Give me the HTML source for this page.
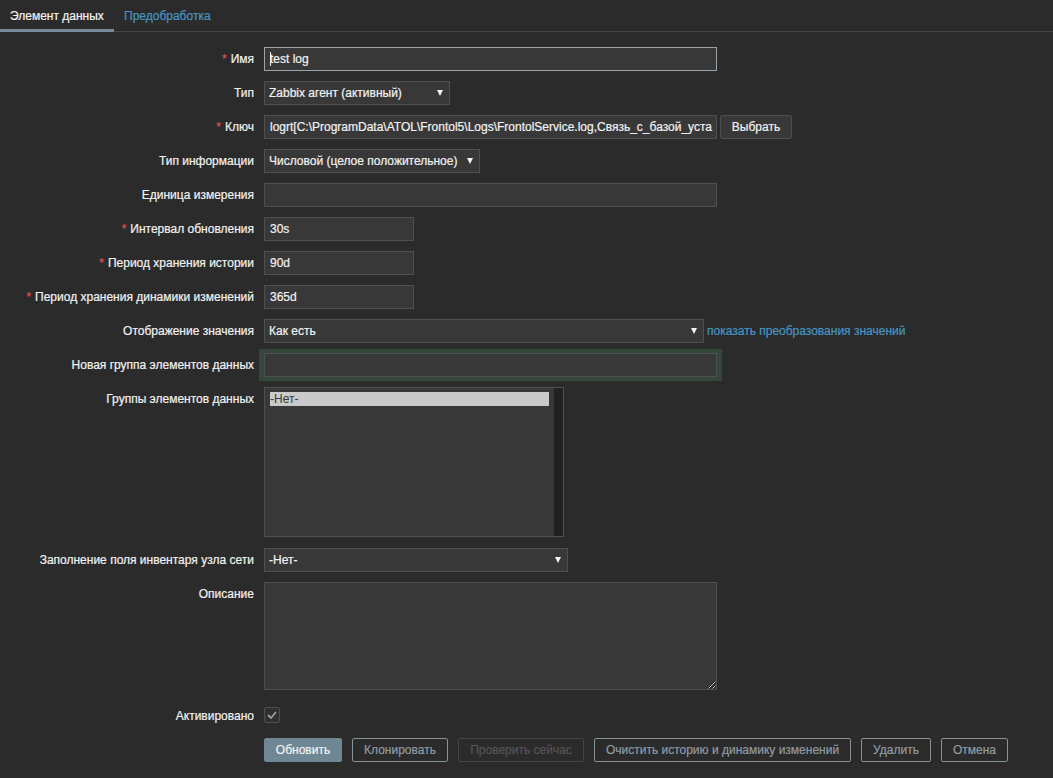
<!DOCTYPE html>
<html><head><meta charset="utf-8">
<style>
*{box-sizing:border-box;margin:0;padding:0}
html,body{width:1053px;height:778px;overflow:hidden;background:#2b2b2b}
body{font-family:"Liberation Sans",sans-serif;font-size:12px;color:#f2f2f2;position:relative;-webkit-text-stroke:0.2px currentColor}
.tabbar{position:absolute;left:0;top:31px;width:1053px;height:1px;background:#454545}
.tab-active{position:absolute;left:0;top:29px;width:114px;height:3px;background:#768d99}
.tab1{position:absolute;left:10px;top:9px;color:#f2f2f2;line-height:14px}
.tab2{position:absolute;left:124px;top:9px;color:#4796c4;line-height:14px}
.lbl{position:absolute;right:799px;white-space:nowrap;line-height:14px;text-align:right}
.ast{color:#dc5050;margin-right:4px}
.in{position:absolute;left:264px;height:24px;background:#383838;border:1px solid #4f4f4f;line-height:22px;padding-left:5px;white-space:nowrap;overflow:hidden}
.arr{position:absolute;width:0;height:0;border-left:3.5px solid transparent;border-right:3.5px solid transparent;border-top:6px solid #f2f2f2}
.btn{position:absolute;top:738px;height:24px;border:1px solid #859399;border-radius:2px;line-height:22px;text-align:center;color:#8f9ba1;background:#2b2b2b}
</style></head><body>
<div class="tab1">Элемент данных</div>
<div class="tab2">Предобработка</div>
<div class="tabbar"></div>
<div class="tab-active"></div>

<div class="lbl" style="top:52px"><span class="ast">*</span>Имя</div>
<div class="in" style="top:47px;width:453px;border-color:#9aa5ab"><span style="position:absolute;left:5px;top:4px;width:1px;height:14px;background:#f2f2f2"></span>test log</div>

<div class="lbl" style="top:86px">Тип</div>
<div class="in" style="top:81px;width:186px;padding-left:4px">Zabbix агент (активный)<div class="arr" style="left:172px;top:8px"></div></div>

<div class="lbl" style="top:120px"><span class="ast">*</span>Ключ</div>
<div class="in" style="top:115px;width:453px">logrt[C:\ProgramData\ATOL\Frontol5\Logs\FrontolService.log,Связь_с_базой_уста</div>
<div class="btn" style="left:720px;top:115px;width:72px;border-color:#4f4f4f;color:#f2f2f2;background:#383838">Выбрать</div>

<div class="lbl" style="top:154px">Тип информации</div>
<div class="in" style="top:149px;width:216px;padding-left:4px">Числовой (целое положительное)<div class="arr" style="left:202px;top:8px"></div></div>

<div class="lbl" style="top:188px">Единица измерения</div>
<div class="in" style="top:183px;width:453px"></div>

<div class="lbl" style="top:222px"><span class="ast">*</span>Интервал обновления</div>
<div class="in" style="top:217px;width:150px">30s</div>

<div class="lbl" style="top:256px"><span class="ast">*</span>Период хранения истории</div>
<div class="in" style="top:251px;width:150px">90d</div>

<div class="lbl" style="top:290px"><span class="ast">*</span>Период хранения динамики изменений</div>
<div class="in" style="top:285px;width:150px">365d</div>

<div class="lbl" style="top:324px">Отображение значения</div>
<div class="in" style="top:319px;width:440px;padding-left:4px">Как есть<div class="arr" style="left:426px;top:8px"></div></div>
<div style="position:absolute;left:707px;top:324px;line-height:14px;color:#4796c4">показать преобразования значений</div>

<div class="lbl" style="top:358px">Новая группа элементов данных</div>
<div style="position:absolute;left:259px;top:349px;width:463px;height:32px;background:#34473a"></div>
<div class="in" style="top:353px;width:453px"></div>

<div class="lbl" style="top:392px">Группы элементов данных</div>
<div class="in" style="top:387px;width:300px;height:150px;padding:0">
  <div style="position:absolute;left:5px;top:4px;width:279px;height:14px;background:#cacaca;color:#383838;-webkit-text-stroke:0;line-height:14px">-Нет-</div>
  <div style="position:absolute;right:0;top:0;width:9px;height:148px;background:#212121"></div>
</div>

<div class="lbl" style="top:553px">Заполнение поля инвентаря узла сети</div>
<div class="in" style="top:548px;width:304px;padding-left:4px">-Нет-<div class="arr" style="left:290px;top:8px"></div></div>

<div class="lbl" style="top:587px">Описание</div>
<div class="in" style="top:582px;width:453px;height:108px"><svg width="10" height="10" style="position:absolute;left:442px;top:97px"><path d="M1.5 8.5 L8.5 1.5 M5.5 8.5 L8.5 5.5" stroke="#1a1a1a" stroke-width="2.2" fill="none"/><path d="M1.5 8.5 L8.5 1.5 M5.5 8.5 L8.5 5.5" stroke="#d0d0d0" stroke-width="1" fill="none"/></svg></div>

<div class="lbl" style="top:709px">Активировано</div>
<div style="position:absolute;left:264px;top:707px;width:16px;height:16px;border:1px solid #4f4f4f;border-radius:2px;background:#303030">
<svg width="14" height="14" style="position:absolute;left:0;top:0"><path d="M3 7 L6 10 L11 4" stroke="#94a0a8" stroke-width="1.8" fill="none"/></svg>
</div>

<div class="btn" style="left:264px;width:78px;background:#6f8792;border-color:#6f8792;color:#f2f2f2">Обновить</div>
<div class="btn" style="left:352px;width:96px">Клонировать</div>
<div class="btn" style="left:458px;width:126px;border-color:#444;color:#555">Проверить сейчас</div>
<div class="btn" style="left:594px;width:257px">Очистить историю и динамику изменений</div>
<div class="btn" style="left:861px;width:70px">Удалить</div>
<div class="btn" style="left:941px;width:67px">Отмена</div>
</body></html>
